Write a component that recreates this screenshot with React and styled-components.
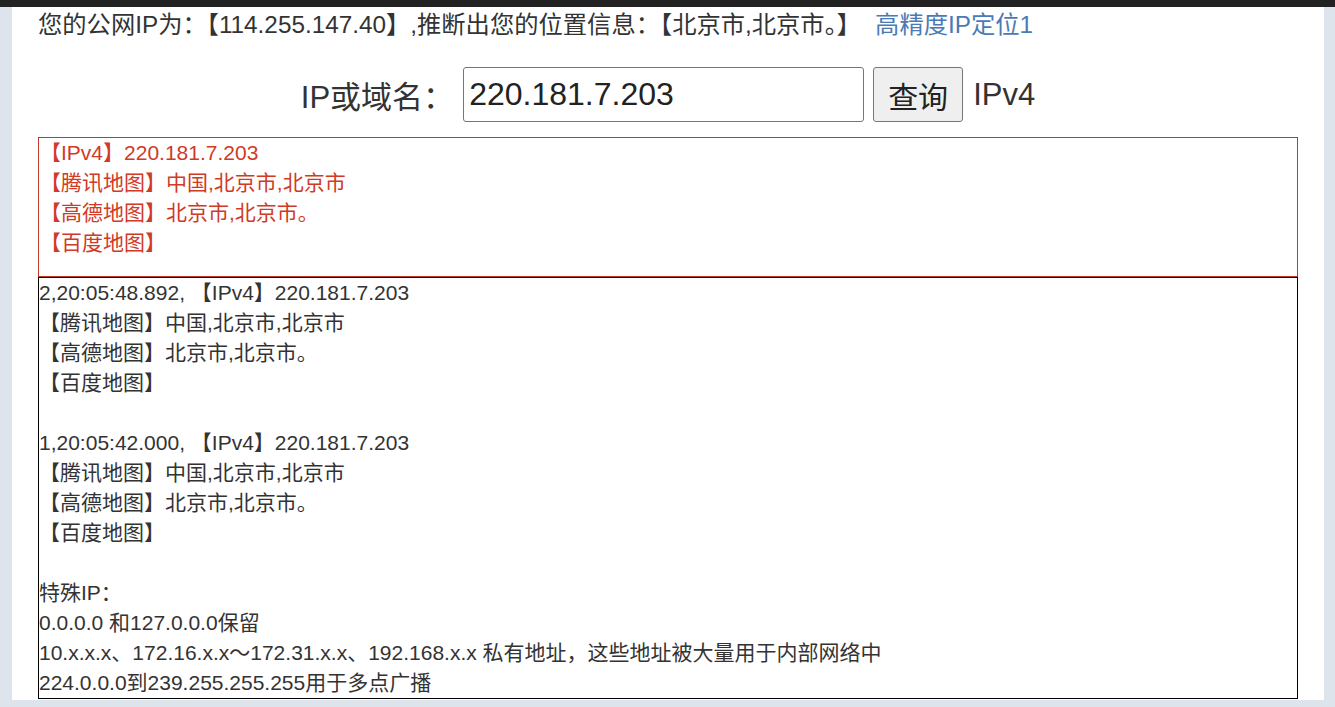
import React from 'react'
import styled, { createGlobalStyle } from 'styled-components'

const GlobalStyle = createGlobalStyle`
  html, body {
    margin: 0;
    padding: 0;
    background: #dee4ec;
    font-family: "Liberation Sans", "Noto Sans CJK SC", sans-serif;
    color: #333;
  }
`

const TopBar = styled.div`
  height: 7px;
  background: #222;
`

const Page = styled.div`
  margin: 0 11px 0 12px;
  background: #fff;
  padding: 0 26px 1px;
`

const Notice = styled.div`
  font-size: 24.3px;
  line-height: 36px;
  white-space: nowrap;
`

const Link = styled.a`
  color: #4a7ab5;
  text-decoration: none;
  margin-left: 14px;
`

const QueryRow = styled.form`
  display: flex;
  align-items: center;
  justify-content: center;
  margin-top: 24px;
  font-size: 31px;
`

const Label = styled.label`
  margin-right: 9px;
`

const Input = styled.input`
  box-sizing: border-box;
  width: 401px;
  height: 55px;
  font: inherit;
  font-size: 32px;
  color: #222;
  padding: 0 5px;
  border: 1px solid #767676;
  border-radius: 3px;
`

const Button = styled.button`
  box-sizing: border-box;
  width: 90px;
  height: 55px;
  margin-left: 9px;
  padding: 0;
  font: inherit;
  font-size: 30px;
  color: #222;
  background: #efefef;
  border: 1px solid #767676;
  border-radius: 3px;
`

const Kind = styled.span`
  margin-left: 10px;
`

const ResultBox = styled.div`
  margin-top: 15px;
  border: 1px solid ${p => (p.$current ? '#c0392b' : '#000')};
  color: ${p => (p.$current ? '#d03a26' : '#333')};
  padding: 0 0 ${p => (p.$current ? '18px' : '0')} ${p => (p.$current ? '1px' : '0')};
  font-size: 21px;
  line-height: 30px;
  white-space: nowrap;
  & + & {
    margin-top: 0;
  }
`

const Line = styled.div`
  min-height: 30px;
`

const current = [
  '【IPv4】220.181.7.203',
  '【腾讯地图】中国,北京市,北京市',
  '【高德地图】北京市,北京市。',
  '【百度地图】'
]

const history = [
  '2,20:05:48.892, 【IPv4】220.181.7.203',
  '【腾讯地图】中国,北京市,北京市',
  '【高德地图】北京市,北京市。',
  '【百度地图】',
  '',
  '1,20:05:42.000, 【IPv4】220.181.7.203',
  '【腾讯地图】中国,北京市,北京市',
  '【高德地图】北京市,北京市。',
  '【百度地图】',
  '',
  '特殊IP：',
  '0.0.0.0 和127.0.0.0保留',
  '10.x.x.x、172.16.x.x～172.31.x.x、192.168.x.x 私有地址，这些地址被大量用于内部网络中',
  '224.0.0.0到239.255.255.255用于多点广播'
]

export default function App () {
  return (
    <>
      <GlobalStyle />
      <TopBar />
      <Page>
        <Notice>
          您的公网IP为：【114.255.147.40】,推断出您的位置信息：【北京市,北京市。】
          <Link href='#'>高精度IP定位1</Link>
        </Notice>
        <QueryRow onSubmit={e => e.preventDefault()}>
          <Label>IP或域名：</Label>
          <Input defaultValue='220.181.7.203' />
          <Button type='submit'>查询</Button>
          <Kind>IPv4</Kind>
        </QueryRow>
        <ResultBox $current>
          {current.map((t, i) => <Line key={i}>{t}</Line>)}
        </ResultBox>
        <ResultBox>
          {history.map((t, i) => <Line key={i}>{t}</Line>)}
        </ResultBox>
      </Page>
    </>
  )
}
